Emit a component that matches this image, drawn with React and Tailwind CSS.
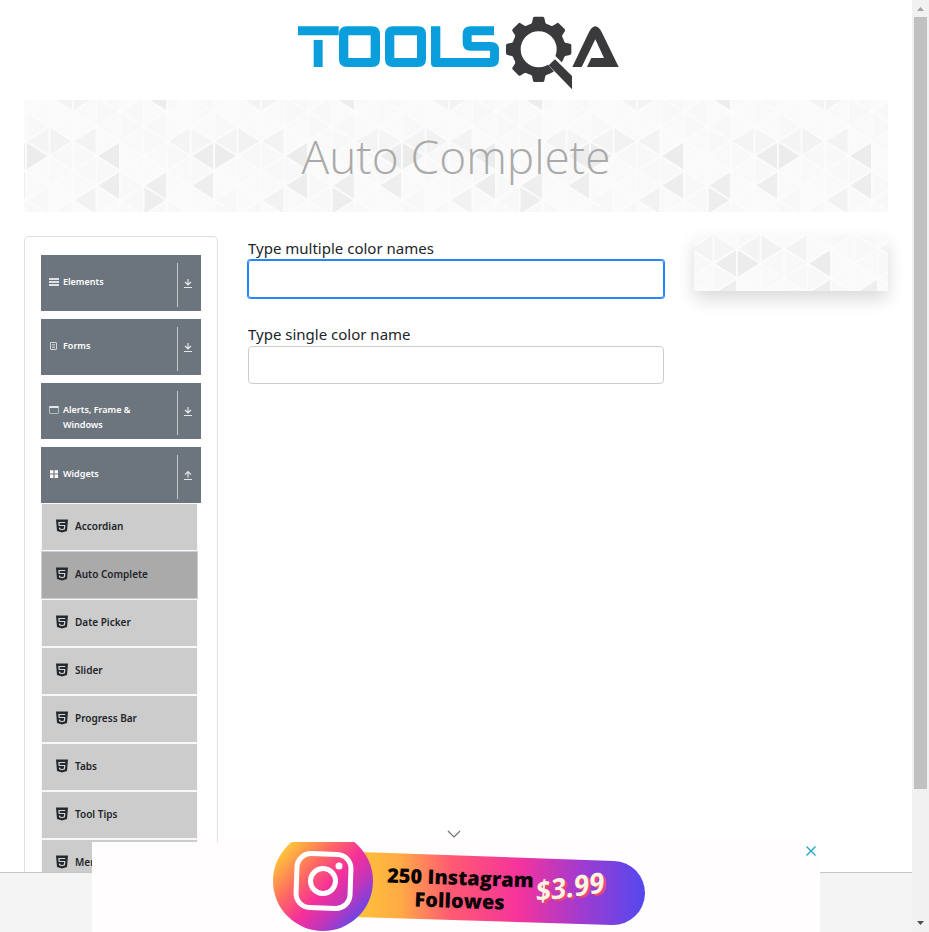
import React from "react";

const COL = 23.5;
const HALF = 14.8;

// Shades keyed by direction, column and row of the triangle's apex
const SHADES = {
  R0_0: "#ececec", L3_0: "#ececec", L7_0: "#ededed",
  L3_2: "#ededed", L5_2: "#eeeeee", R5_3: "#eeeeee", L7_2: "#eeeeee",
  "R1_-1": "#f2f2f2", "L2_-1": "#f3f3f3", "L5_-4": "#ededed", L2_3: "#f2f2f2",
  "L6_-1": "#f4f4f4", "R7_-1": "#f5f5f5", "L0_-1": "#f4f4f4", "L1_-4": "#f3f3f3", "R2_-4": "#f3f3f3",
};
const LIGHT = ["#f9f9f9", "#f8f8f8", "#fafafa", "#f8f8f8", "#fafafa"];

const TRIANGLES = [];
for (let k = -1; k <= 8; k++) {
  for (let r = -5; r <= 5; r++) {
    const col = (k + 8) % 8;
    const apexRight = Math.abs(r % 2) === ((k + 1) % 2 === 0 ? 1 : 0);
    const x0 = k * COL;
    const x1 = x0 + COL;
    const y = (r + 4) * HALF;
    const dir = apexRight ? "R" : "L";
    const base = apexRight ? x0 : x1;
    const apex = apexRight ? x1 : x0;
    TRIANGLES.push({
      key: `${dir}${k}_${r}`,
      points: `${base},${y - HALF} ${base},${y + HALF} ${apex},${y}`,
      fill: SHADES[`${dir}${col}_${r}`] || LIGHT[(col * 3 + (r + 5) * 2) % 5],
    });
  }
}

function TriangleBackdrop({ id }) {
  return (
    <svg className="absolute inset-0 h-full w-full" aria-hidden="true">
      <defs>
        <pattern id={id} x="-54" y="-59.2" width="188" height="118.4" patternUnits="userSpaceOnUse">
          {TRIANGLES.map((t) => (
            <polygon key={t.key} points={t.points} fill={t.fill} />
          ))}
          {TRIANGLES.map((t) => (
            <polygon key={t.key} points={t.points} fill="none" stroke="#fcfcfc" strokeWidth="1.6" strokeLinejoin="round" />
          ))}
        </pattern>
      </defs>
      <svg x="50%" y="50%" overflow="visible">
        <rect x="-2000" y="-200" width="4000" height="400" fill={`url(#${id})`} />
      </svg>
    </svg>
  );
}

function Logo() {
  return (
    <svg viewBox="36 0 984 300" className="h-[100px] w-[328px]" role="img" aria-label="ToolsQA">
      <g fill="#0a9fdc">
        <path d="M54 79H176V106H54ZM101 120H128V201H101Z" />
        <path fillRule="evenodd" d="M201 79H276Q300 79 300 103V177Q300 201 276 201H201Q177 201 177 177V103Q177 79 201 79ZM205 106V174H272V106Z" />
        <path fillRule="evenodd" d="M339 79H414Q438 79 438 103V177Q438 201 414 201H339Q315 201 315 177V103Q315 79 339 79ZM343 106V174H411V106Z" />
        <path d="M642 79H572Q548 79 548 103V128Q548 152 572 152H630V174H481V79H453V190Q453 201 464 201H633Q657 201 657 177V150Q657 126 633 126H575V106H642Z" />
      </g>
      <g fill="#3a3a3c">
        <circle cx="776" cy="148" r="67" fill="none" stroke="#3a3a3c" strokeWidth="26" />
        {[0, 45, 90, 180, 225, 270, 315].map((a) => (
          <path key={a} transform={`rotate(${a} 776 148)`} d="M748 78L756 68L759 54Q760 50 764 50H788Q792 50 793 54L796 68L804 78Z" />
        ))}
        <path d="M800 190L824 166L890 232V290Z" fill="#fff" />
        <path d="M825 178L876 228V268L806 196Z" />
        <path d="M877 201L926 98Q946 60 966 98L1016 201H921L934 174H972L946 118L905 201Z" />
      </g>
    </svg>
  );
}

const menuIcons = {
  elements: <path d="M0 1h10v2H0zM0 4h10v2H0zM0 7h10v2H0z" fill="#dfe2e4" />,
  forms: (
    <g fill="none" stroke="#d5d8da">
      <rect x="1.5" y="1.5" width="6" height="7" rx="0.5" />
      <path d="M3 3.5h3M3 5h3M3 6.5h3" strokeWidth="0.7" />
    </g>
  ),
  alerts: (
    <g>
      <rect x="0.5" y="1.5" width="9" height="7" rx="0.5" fill="none" stroke="#b6bbbf" />
      <path d="M0.5 1h9v2h-9z" fill="#e6e8e9" />
    </g>
  ),
  widgets: <path d="M1 1.200h3.400v3.400H1zM5.600 1.200H9v3.400H5.600zM1 5.600h3.400V9H1zM5.600 5.600H9V9H5.600z" fill="#fff" />,
};

const groups = [
  { name: "Elements", icon: "elements" },
  { name: "Forms", icon: "forms" },
  { name: "Alerts, Frame & Windows", icon: "alerts" },
  { name: "Widgets", icon: "widgets", open: true },
];

const widgets = ["Accordian", "Auto Complete", "Date Picker", "Slider", "Progress Bar", "Tabs", "Tool Tips", "Menu"];

function Html5Icon() {
  return (
    <svg viewBox="0 0 12 14" className="h-[14px] w-3 shrink-0" aria-hidden="true">
      <path d="M0 0.500H12L11 12L6 13.500L1 12Z" fill="#24292d" />
      <path d="M9.300 3.500H3L3.200 6.500H8.700L8.400 9.900L6 10.700L3.600 9.900L3.500 8.600" fill="none" stroke="#d4d4d4" strokeWidth="1.2" />
    </svg>
  );
}

function GroupButton({ name, icon, open }) {
  return (
    <button type="button" aria-expanded={!!open} className="flex h-14 w-full items-start bg-[#6c757d] pt-2 pl-2 text-left text-white">
      <svg viewBox="0 0 10 10" className="mt-[14px] size-[10px] shrink-0" aria-hidden="true">
        {menuIcons[icon]}
      </svg>
      <span className="mt-[11px] ml-1 flex-1 pr-8 text-[9px] leading-[15px] font-semibold">{name}</span>
      <span className="flex h-11 w-6 shrink-0 items-center border-l border-[#c4c8cb] pb-1 pl-[5px]">
        <svg viewBox="0 0 10 10" className="size-[10px]" fill="none" stroke="#e4e6e8" strokeWidth="1.2" aria-hidden="true">
          <path d={open ? "M5 7.500V2M2 4.600L5 1.600L8 4.600M1 9.500H9" : "M5 1V6.600M2 4L5 7L8 4M1 9.500H9"} />
        </svg>
      </span>
    </button>
  );
}

function Sidebar() {
  return (
    <nav className="rounded-[5px] border border-[#dfdfdf] px-4 pt-[18px]">
      <div className="flex flex-col gap-2">
        {groups.map((g) => (
          <GroupButton key={g.name} {...g} />
        ))}
      </div>
      <ul className="mr-[3px]">
        {widgets.map((w) => (
          <li
            key={w}
            className={
              w === "Auto Complete"
                ? "flex h-12 items-stretch border border-[#c9ced4] bg-[#aaaaaa]"
                : "flex h-12 items-stretch border border-[#f8f8f8] bg-[#cccccc]"
            }
          >
            <a href="#" className="flex flex-1 items-center gap-[7px] pb-[2px] pl-[14px] text-[10px] leading-[15px] font-semibold text-[#212529]">
              <Html5Icon />
              {w}
            </a>
          </li>
        ))}
      </ul>
    </nav>
  );
}

function AdBanner() {
  return (
    <aside className="absolute bottom-0 left-1/2 h-[90px] w-[728px] -translate-x-1/2 bg-[#fffdfd]">
      <a href="#" className="flex justify-center">
        <svg viewBox="266 842 380 90" className="h-[90px] w-[380px]" role="img" aria-label="250 Instagram Followes $3.99">
          <defs>
            <linearGradient id="pill" x1="360" x2="644" y1="0" y2="0" gradientUnits="userSpaceOnUse">
              <stop offset="0" stopColor="#ffc03a" />
              <stop offset="0.14" stopColor="#ffab45" />
              <stop offset="0.32" stopColor="#ff5a72" />
              <stop offset="0.56" stopColor="#f5339c" />
              <stop offset="0.78" stopColor="#a03bd0" />
              <stop offset="1" stopColor="#5448ee" />
            </linearGradient>
            <linearGradient id="disc" x1="285" x2="360" y1="850" y2="920" gradientUnits="userSpaceOnUse">
              <stop offset="0" stopColor="#ffc23a" />
              <stop offset="0.3" stopColor="#ff6a62" />
              <stop offset="0.55" stopColor="#f5309a" />
              <stop offset="0.75" stopColor="#c535b8" />
              <stop offset="1" stopColor="#6048ea" />
            </linearGradient>
          </defs>
          <path d="M360 852L614 861A32 32 0 0 1 612 925L355 917Z" fill="url(#pill)" />
          <circle cx="323" cy="881" r="50" fill="url(#disc)" />
          <g fill="none" stroke="#fff" strokeWidth="5" transform="rotate(2 323 881)">
            <rect x="296.500" y="854" width="54" height="54" rx="14" />
            <circle cx="323" cy="881" r="12.500" />
          </g>
          <circle cx="339" cy="866" r="3.500" fill="#fff" />
          <g fontFamily="'Open Sans', 'Noto Sans', sans-serif" fontWeight="800" textAnchor="middle">
            <g fill="#0b0508" fontSize="20" transform="rotate(2 460 890)">
              <text x="460" y="885">250 Instagram</text>
              <text x="460" y="908">Followes</text>
            </g>
            <g fontSize="28" fontWeight="700" fontStyle="italic" transform="rotate(-8 570 888)">
              <text x="572" y="899" fill="#e8486a">$3.99</text>
              <text x="570" y="897" fill="#fff3e4">$3.99</text>
            </g>
          </g>
        </svg>
      </a>
      <button type="button" aria-label="Close ad" className="absolute top-1 right-1 flex size-[10px] items-center justify-center">
        <svg viewBox="0 0 10 10" className="size-[10px]" stroke="#15a9c6" strokeWidth="1.3" aria-hidden="true">
          <path d="M0.500 0.500L9.500 9.500M9.500 0.500L0.500 9.500" />
        </svg>
      </button>
      <button type="button" aria-label="Collapse ad" className="absolute -top-[14px] left-1/2 flex h-3 w-[18px] -translate-x-1/2 items-center justify-start">
        <svg viewBox="0 0 14 8" className="h-2 w-[14px]" fill="none" stroke="#6f6f6f" strokeWidth="1.2" aria-hidden="true">
          <path d="M1 1L7 7L13 1" />
        </svg>
      </button>
    </aside>
  );
}

function ScrollTrack() {
  return (
    <div className="flex w-[17px] shrink-0 flex-col items-center bg-[#f1f1f1]" aria-hidden="true">
      <svg viewBox="0 0 17 17" className="size-[17px]" fill="#a3a3a3">
        <path d="M5 11L8.500 7L12 11Z" />
      </svg>
      <div className="flex w-[13px] flex-1 flex-col">
        <div className="h-[86%] bg-[#c1c1c1]" />
      </div>
      <svg viewBox="0 0 17 17" className="size-[17px]" fill="#505050">
        <path d="M5 6L8.500 10L12 6Z" />
      </svg>
    </div>
  );
}

export default function App() {
  return (
    <div className="flex h-screen overflow-hidden bg-white font-['Noto_Sans','Open_Sans',sans-serif] text-[#212529]">
      <div className="relative flex min-w-0 flex-1 flex-col">
        <div className="min-h-0 flex-1 overflow-hidden px-6">
          <header className="flex h-[100px] justify-center">
            <a href="#">
              <Logo />
            </a>
          </header>
          <div className="relative flex h-28 items-center justify-center">
            <TriangleBackdrop id="banner-triangles" />
            <h1 className="relative font-['Open_Sans','Noto_Sans',sans-serif] text-[46px] leading-[56px] font-light text-[#aaaaaa]">Auto Complete</h1>
          </div>
          <div className="mt-6 grid grid-cols-[194px_1fr_194px] items-start gap-[30px]">
            <Sidebar />
            <main>
              <label htmlFor="multi" className="block text-[15px] leading-6">Type multiple color names</label>
              <input
                id="multi"
                type="text"
                className="block h-[38px] w-full rounded-[3px] border border-[#2684ff] px-2 ring-1 ring-[#2684ff] outline-none"
              />
              <label htmlFor="single" className="mt-6 block text-[15px] leading-6">Type single color name</label>
              <input id="single" type="text" className="block h-[38px] w-full rounded-[4px] border border-[#cccccc] px-2 outline-none" />
            </main>
            <div className="relative h-[55px] shadow-[0_8px_16px_rgba(0,0,0,0.15)]">
              <TriangleBackdrop id="card-triangles" />
            </div>
          </div>
        </div>
        <footer className="h-[60px] shrink-0 border-t border-[#c6c6c6] bg-[#f4f4f4]" />
        <AdBanner />
      </div>
      <ScrollTrack />
    </div>
  );
}
